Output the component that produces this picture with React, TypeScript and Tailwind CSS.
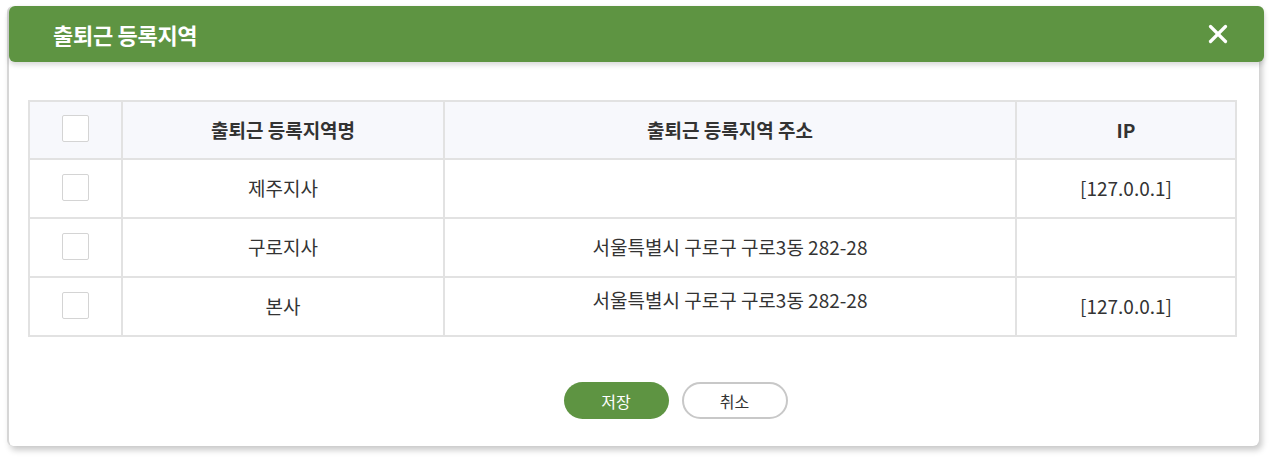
import { X } from 'lucide-react'

const rows = [
  { name: '제주지사', address: '', ip: '[127.0.0.1]' },
  { name: '구로지사', address: '서울특별시 구로구 구로3동 282-28', ip: '' },
  { name: '본사', address: '서울특별시 구로구 구로3동 282-28', ip: '[127.0.0.1]', raised: true },
]

function CheckBox() {
  return <span className="inline-block w-[27px] h-[27px] rounded-[2px] border border-[#d4d4d4] bg-white" />
}

export default function App() {
  return (
    <div
      className="min-h-[471px] bg-white pt-[6px] pl-[7px]"
      style={{ fontFamily: '"Noto Sans CJK KR", "Noto Sans", sans-serif' }}
    >
      <div className="w-[1252px] rounded-md bg-white border-l-2 border-[#d6d6d6] shadow-[3px_4px_6px_rgba(0,0,0,0.22)]">
        {/* Header */}
        <div className="relative z-10 h-[56px] w-[1255px] rounded-md bg-[#5e9442] flex items-center justify-between pl-[44px] pr-[31px] shadow-[0_3px_5px_rgba(0,0,0,0.15)]">
          <h2 className="text-[22px] font-bold text-white tracking-[-0.3px]">출퇴근 등록지역</h2>
          <X className="w-[30px] h-[30px] text-white" strokeWidth={2.6} />
        </div>

        {/* Body */}
        <div className="pl-[19px] pt-[38px] pb-[27px]">
          <table className="w-[1209px] border-collapse text-[19px] leading-[1.4] text-[#333]">
            <thead>
              <tr className="h-[58px] bg-[#f7f8fc]">
                <th className="w-[93px] border-2 border-[#e2e2e2]">
                  <div className="flex justify-center -mt-[3px]">
                    <CheckBox />
                  </div>
                </th>
                <th className="w-[322px] border-2 border-[#e2e2e2] font-bold">출퇴근 등록지역명</th>
                <th className="w-[572px] border-2 border-[#e2e2e2] font-bold">출퇴근 등록지역 주소</th>
                <th className="border-2 border-[#e2e2e2] font-bold">IP</th>
              </tr>
            </thead>
            <tbody>
              {rows.map((row) => (
                <tr key={row.name} className="h-[59px]">
                  <td className="border-2 border-[#e2e2e2]">
                    <div className="flex justify-center -mt-[2px]">
                      <CheckBox />
                    </div>
                  </td>
                  <td className="border-2 border-[#e2e2e2] text-center">{row.name}</td>
                  <td className={`border-2 border-[#e2e2e2] text-center ${row.raised ? 'pb-[12px]' : ''}`}>
                    {row.address}
                  </td>
                  <td className="border-2 border-[#e2e2e2] text-center">{row.ip}</td>
                </tr>
              ))}
            </tbody>
          </table>

          {/* Buttons */}
          <div className="mt-[45px] flex justify-center gap-[13px] pl-[64px]">
            <button className="w-[105px] h-[37px] rounded-full bg-[#5e9442] text-[16px] text-white">저장</button>
            <button className="w-[106px] h-[37px] rounded-full border-2 border-[#c8c8c8] bg-white text-[16px] text-[#333]">
              취소
            </button>
          </div>
        </div>
      </div>
    </div>
  )
}
